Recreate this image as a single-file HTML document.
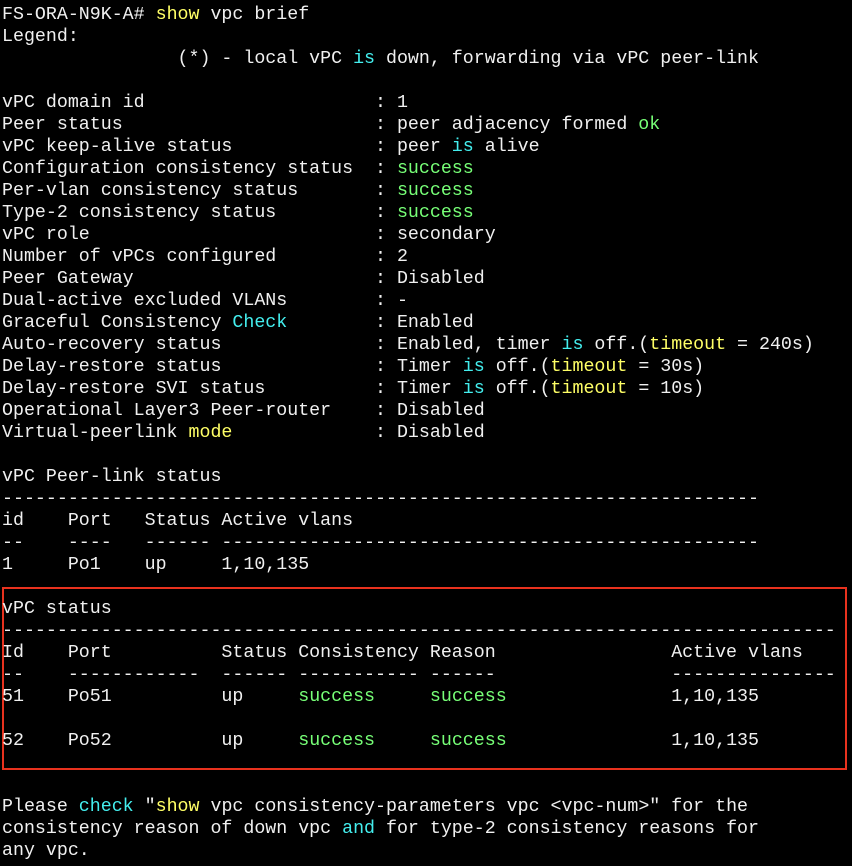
<!DOCTYPE html>
<html><head><style>
html,body{margin:0;padding:0;background:#000;width:852px;height:866px;overflow:hidden}
pre{margin:0;position:absolute;left:2px;top:4px;font-family:"Liberation Mono",monospace;font-size:18.3px;line-height:22px;color:#f0f0f0}
.y{color:#ffff66}.c{color:#44eeee}.g{color:#77ff77}
.box{position:absolute;left:2px;top:587px;width:841px;height:179px;border:2px solid #e8321e}
</style></head><body>
<div class="box"></div>
<pre>FS-ORA-N9K-A# <span class="y">show</span> vpc brief
Legend:
                (*) - local vPC <span class="c">is</span> down, forwarding via vPC peer-link

vPC domain id                     : 1
Peer status                       : peer adjacency formed <span class="g">ok</span>
vPC keep-alive status             : peer <span class="c">is</span> alive
Configuration consistency status  : <span class="g">success</span>
Per-vlan consistency status       : <span class="g">success</span>
Type-2 consistency status         : <span class="g">success</span>
vPC role                          : secondary
Number of vPCs configured         : 2
Peer Gateway                      : Disabled
Dual-active excluded VLANs        : -
Graceful Consistency <span class="c">Check</span>        : Enabled
Auto-recovery status              : Enabled, timer <span class="c">is</span> off.(<span class="y">timeout</span> = 240s)
Delay-restore status              : Timer <span class="c">is</span> off.(<span class="y">timeout</span> = 30s)
Delay-restore SVI status          : Timer <span class="c">is</span> off.(<span class="y">timeout</span> = 10s)
Operational Layer3 Peer-router    : Disabled
Virtual-peerlink <span class="y">mode</span>             : Disabled

vPC Peer-link status
---------------------------------------------------------------------
id    Port   Status Active vlans
--    ----   ------ -------------------------------------------------
1     Po1    up     1,10,135

vPC status
----------------------------------------------------------------------------
Id    Port          Status Consistency Reason                Active vlans
--    ------------  ------ ----------- ------                ---------------
51    Po51          up     <span class="g">success</span>     <span class="g">success</span>               1,10,135

52    Po52          up     <span class="g">success</span>     <span class="g">success</span>               1,10,135


Please <span class="c">check</span> "<span class="y">show</span> vpc consistency-parameters vpc &lt;vpc-num&gt;" for the
consistency reason of down vpc <span class="c">and</span> for type-2 consistency reasons for
any vpc.</pre>
</body></html>
